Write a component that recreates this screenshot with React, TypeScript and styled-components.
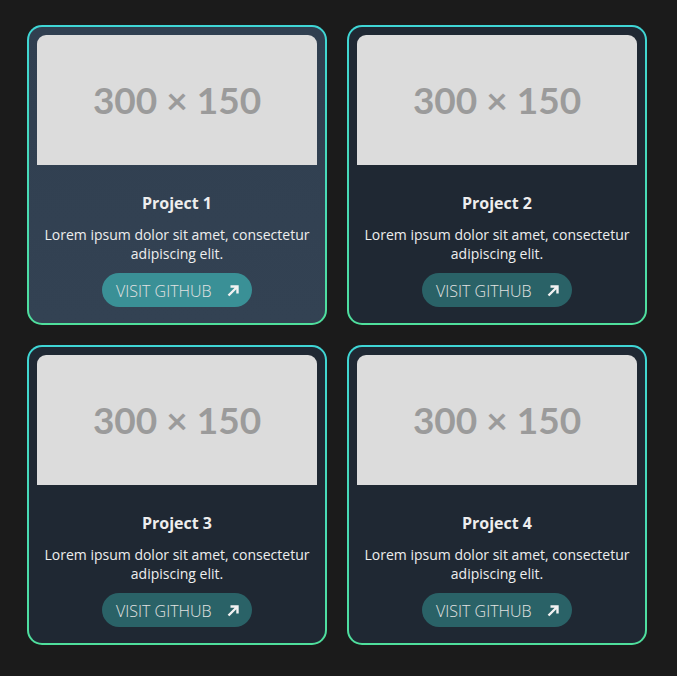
import React from "react";
import styled, { createGlobalStyle } from "styled-components";

const GlobalStyle = createGlobalStyle`
  html, body {
    margin: 0;
    padding: 0;
    background-color: #1b1b1b;
    font-family: "Open Sans", "Liberation Sans", sans-serif;
  }
`;

// styled components
const Page = styled.div`
  min-height: 676px;
  padding: 25px 27px;
  box-sizing: border-box;
  background-color: #1b1b1b;
`;

const Grid = styled.div`
  display: grid;
  grid-template-columns: repeat(2, 300px);
  gap: 20px;
`;

const Card = styled.div<{ $active?: boolean }>`
  width: 300px;
  height: 300px;
  box-sizing: border-box;
  border: 2px solid transparent;
  border-radius: 15px;
  padding: 8px;
  display: flex;
  flex-direction: column;
  align-items: center;
  background:
    linear-gradient(${(p) => (p.$active ? "#303f50" : "#1f2833")}, ${(p) => (p.$active ? "#334253" : "#1f2833")}) padding-box,
    linear-gradient(180deg, #3fd6d6, #4fdf9c) border-box;
`;

const Thumb = styled.div`
  width: 280px;
  height: 130px;
  flex-shrink: 0;
  padding-bottom: 2px;
  box-sizing: border-box;
  background-color: #dcdcdc;
  border-radius: 9px 9px 0 0;
  display: flex;
  align-items: center;
  justify-content: center;
  color: #9b9b9b;
  font-family: Lato, "Liberation Sans", sans-serif;
  font-weight: 700;
  font-size: 37px;
`;

const Title = styled.h3`
  margin: 27px 0 0;
  font-size: 16px;
  line-height: 22px;
  font-weight: 700;
  color: #eeeeee;
`;

const Description = styled.p`
  margin: 11px 0 0;
  padding: 0 4px;
  font-size: 14px;
  line-height: 19px;
  color: #eeeeee;
  text-align: center;
`;

const GithubButton = styled.a<{ $active?: boolean }>`
  margin-top: 10px;
  width: 150px;
  height: 34px;
  box-sizing: border-box;
  border-radius: 17px;
  padding: 2px 12px 0 14px;
  display: flex;
  align-items: center;
  justify-content: space-between;
  background-color: ${(p) => (p.$active ? "#3a9096" : "#2a6267")};
  color: #e2e2e2;
  font-size: 16px;
  font-weight: 300;
  text-decoration: none;
  cursor: pointer;
`;

const ArrowIcon = () => (
  <svg width="14" height="14" viewBox="0 0 14 14">
    <path
      d="M2.5 11.5 L10.5 3.5 M4.5 2.5 H11.5 V9.5"
      fill="none"
      stroke="#f2f2f2"
      strokeWidth="2.4"
    />
  </svg>
);

const projects = [1, 2, 3, 4];

const App = () => {
  return (
    <Page>
      <GlobalStyle />
      <Grid>
        {projects.map((n) => (
          <Card key={n} $active={n === 1}>
            <Thumb>300 × 150</Thumb>
            <Title>Project {n}</Title>
            <Description>
              Lorem ipsum dolor sit amet, consectetur adipiscing elit.
            </Description>
            <GithubButton $active={n === 1}>
              VISIT GITHUB
              <ArrowIcon />
            </GithubButton>
          </Card>
        ))}
      </Grid>
    </Page>
  );
};

export default App;
